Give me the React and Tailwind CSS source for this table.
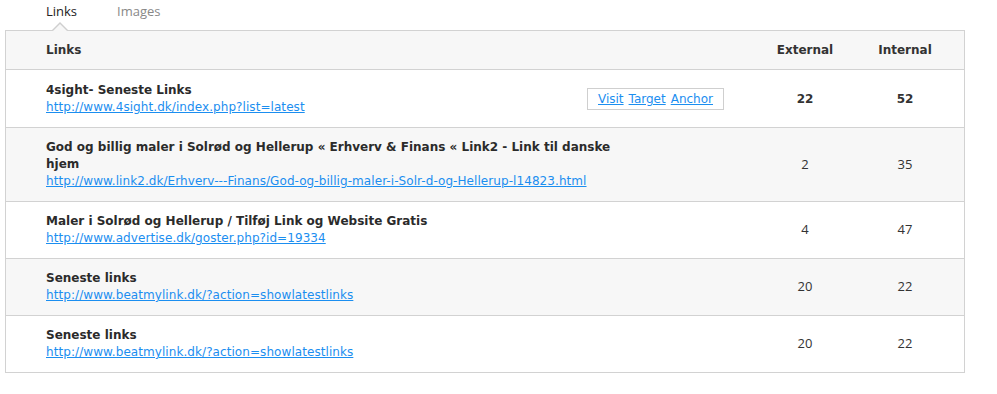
import React from "react";

const rows = [
  {
    title: "4sight- Seneste Links",
    url: "http://www.4sight.dk/index.php?list=latest",
    ext: "22",
    int: "52",
    active: true,
  },
  {
    title:
      "God og billig maler i Solrød og Hellerup « Erhverv & Finans « Link2 - Link til danske hjem",
    url: "http://www.link2.dk/Erhverv---Finans/God-og-billig-maler-i-Solr-d-og-Hellerup-l14823.html",
    ext: "2",
    int: "35",
  },
  {
    title: "Maler i Solrød og Hellerup / Tilføj Link og Website Gratis",
    url: "http://www.advertise.dk/goster.php?id=19334",
    ext: "4",
    int: "47",
  },
  {
    title: "Seneste links",
    url: "http://www.beatmylink.dk/?action=showlatestlinks",
    ext: "20",
    int: "22",
  },
  {
    title: "Seneste links",
    url: "http://www.beatmylink.dk/?action=showlatestlinks",
    ext: "20",
    int: "22",
  },
];

const verdana = "font-['DejaVu_Sans',Verdana,sans-serif]";

export default function App() {
  return (
    <div className="w-[997px] h-[394px] bg-white text-[#333]">
      {/* tabs */}
      <div className="flex h-[30px] items-start pl-[46px] pt-[2px] font-['Open_Sans',sans-serif] text-[13px]">
        <div className="relative text-[#222]">
          Links
          <span className="absolute left-[6px] top-[20px] block h-0 w-0 border-x-[8px] border-b-[8px] border-x-transparent border-b-[#cfcfcf]" />
          <span className="absolute left-[7px] top-[21.5px] block h-0 w-0 border-x-[7px] border-b-[7px] border-x-transparent border-b-[#f7f7f7]" />
        </div>
        <div className="ml-[40px] text-[#888]">Images</div>
      </div>

      {/* table */}
      <div className="mx-[5px] w-[960px] border border-[#d2d2d2]">
        <div className={`grid h-[38px] grid-cols-[1fr_100px_100px] items-center bg-[#f7f7f7] pr-[9px] text-[12px] font-bold ${verdana}`}>
          <div className="pl-[40px]">Links</div>
          <div className="text-center">External</div>
          <div className="text-center">Internal</div>
        </div>
        {rows.map((r, i) => (
          <div
            key={i}
            className={`grid grid-cols-[1fr_100px_100px] items-center border-t border-[#d2d2d2] pr-[9px] ${
              i % 2 === 1 ? "bg-[#f7f7f7]" : "bg-white"
            }`}
          >
            <div className={`flex items-center pb-[11px] pl-[40px] ${r.active ? "pt-[12px]" : "pt-[11px]"}`}>
              <div className={`w-[580px] text-[12px] leading-[17px] ${verdana}`}>
                <div className="font-bold text-[#2b2b2b]">{r.title}</div>
                <a href="#" className="tracking-[0.07px] text-[#1b8ef0] underline">
                  {r.url}
                </a>
              </div>
              {r.active && (
                <div className={`-ml-[39px] flex h-[22px] items-center gap-[5px] border border-[#cfcfcf] bg-white px-[10px] text-[12px] ${verdana}`}>
                  <a href="#" className="text-[#1b8ef0] underline">Visit</a>
                  <a href="#" className="text-[#1b8ef0] underline">Target</a>
                  <a href="#" className="text-[#1b8ef0] underline">Anchor</a>
                </div>
              )}
            </div>
            {r.active ? (
              <>
                <div className={`text-center text-[12px] font-bold ${verdana}`}>{r.ext}</div>
                <div className={`text-center text-[12px] font-bold ${verdana}`}>{r.int}</div>
              </>
            ) : (
              <>
                <div className="text-center font-['Open_Sans',sans-serif] text-[13px] text-[#333]">{r.ext}</div>
                <div className="text-center font-['Open_Sans',sans-serif] text-[13px] text-[#333]">{r.int}</div>
              </>
            )}
          </div>
        ))}
      </div>
    </div>
  );
}
